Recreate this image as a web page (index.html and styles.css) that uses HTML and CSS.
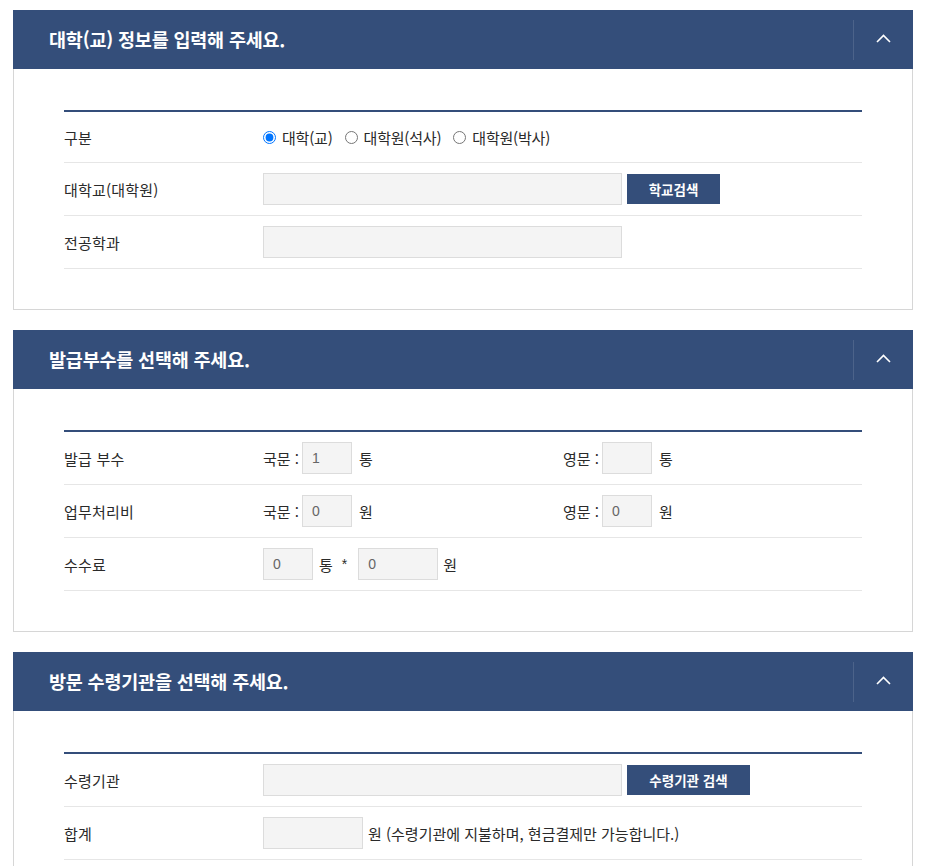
FILE: index.html
```html
<!DOCTYPE html>
<html lang="ko">
<head>
<meta charset="utf-8">
<title>증명서 발급</title>
<link rel="stylesheet" href="styles.css">
</head>
<body>
<div class="page">

  <section class="panel">
    <header class="panel-head">
      <h2 class="panel-title">대학(교) 정보를 입력해 주세요.</h2>
      <button class="toggle" type="button" aria-label="접기">
        <svg width="15" height="9" viewBox="0 0 15 9"><path d="M1 8 L7.5 1.5 L14 8" fill="none" stroke="#fff" stroke-width="1.6"/></svg>
      </button>
    </header>
    <div class="panel-body">
      <div class="form-table">
        <div class="row row-radio">
          <div class="label">구분</div>
          <div class="value radios">
            <label class="radio"><input type="radio" name="kind" checked>대학(교)</label>
            <label class="radio"><input type="radio" name="kind">대학원(석사)</label>
            <label class="radio"><input type="radio" name="kind">대학원(박사)</label>
          </div>
        </div>
        <div class="row">
          <div class="label">대학교(대학원)</div>
          <div class="value">
            <input class="field wide" type="text">
            <button class="btn btn-school" type="button">학교검색</button>
          </div>
        </div>
        <div class="row">
          <div class="label">전공학과</div>
          <div class="value">
            <input class="field wide" type="text">
          </div>
        </div>
      </div>
    </div>
  </section>

  <section class="panel">
    <header class="panel-head">
      <h2 class="panel-title">발급부수를 선택해 주세요.</h2>
      <button class="toggle" type="button" aria-label="접기">
        <svg width="15" height="9" viewBox="0 0 15 9"><path d="M1 8 L7.5 1.5 L14 8" fill="none" stroke="#fff" stroke-width="1.6"/></svg>
      </button>
    </header>
    <div class="panel-body">
      <div class="form-table">
        <div class="row">
          <div class="label">발급 부수</div>
          <div class="value halves">
            <div class="half"><span class="pre">국문 :</span><input class="field small" type="text" value="1"><span class="unit">통</span></div>
            <div class="half"><span class="pre">영문 :</span><input class="field small" type="text"><span class="unit">통</span></div>
          </div>
        </div>
        <div class="row">
          <div class="label">업무처리비</div>
          <div class="value halves">
            <div class="half"><span class="pre">국문 :</span><input class="field small" type="text" value="0"><span class="unit">원</span></div>
            <div class="half"><span class="pre">영문 :</span><input class="field small" type="text" value="0"><span class="unit">원</span></div>
          </div>
        </div>
        <div class="row">
          <div class="label">수수료</div>
          <div class="value">
            <input class="field small" type="text" value="0"><span class="unit u-count">통</span><span class="times">*</span><input class="field medium" type="text" value="0"><span class="unit u-won">원</span>
          </div>
        </div>
      </div>
    </div>
  </section>

  <section class="panel">
    <header class="panel-head">
      <h2 class="panel-title">방문 수령기관을 선택해 주세요.</h2>
      <button class="toggle" type="button" aria-label="접기">
        <svg width="15" height="9" viewBox="0 0 15 9"><path d="M1 8 L7.5 1.5 L14 8" fill="none" stroke="#fff" stroke-width="1.6"/></svg>
      </button>
    </header>
    <div class="panel-body">
      <div class="form-table">
        <div class="row">
          <div class="label">수령기관</div>
          <div class="value">
            <input class="field wide" type="text">
            <button class="btn btn-agency" type="button">수령기관 검색</button>
          </div>
        </div>
        <div class="row">
          <div class="label">합계</div>
          <div class="value">
            <input class="field total" type="text"><span class="unit u-won">원 (수령기관에 지불하며, 현금결제만 가능합니다.)</span>
          </div>
        </div>
      </div>
    </div>
  </section>

</div>
</body>
</html>
```

FILE: styles.css
```css
* { box-sizing: border-box; }

html, body {
  margin: 0;
  padding: 0;
  background: #fff;
}

body {
  font-family: "Noto Sans CJK KR", "Noto Sans", sans-serif;
  font-size: 15px;
  color: #2a2a2a;
}

.page {
  padding: 10px 12px 0 13px;
  width: 925px;
}

.panel {
  width: 900px;
  margin-bottom: 20px;
}

.panel-head {
  height: 59px;
  background: #344e7a;
  display: flex;
  align-items: center;
  padding-left: 36px;
}

.panel-title {
  flex: 1;
  margin: 0;
  color: #fff;
  font-size: 18.5px;
  font-weight: 700;
  letter-spacing: -0.2px;
  line-height: 1;
}

.toggle {
  width: 60px;
  height: 40px;
  border: 0;
  border-left: 1px solid rgba(255, 255, 255, 0.12);
  background: transparent;
  padding: 0;
  display: flex;
  align-items: center;
  justify-content: center;
  cursor: pointer;
}

.toggle svg { display: block; margin-top: -2px; }

.panel-body {
  border: 1px solid #d6d6d6;
  border-top: 0;
  padding: 41px 50px 40px 50px;
}

.form-table {
  border-top: 2px solid #344e7a;
}

.row {
  display: flex;
  align-items: center;
  height: 53px;
  border-bottom: 1px solid #e6e6e6;
}

.row-radio { height: 51px; }

.label {
  width: 199px;
  flex: none;
  line-height: 1;
  letter-spacing: 0.2px;
}

.value {
  flex: 1;
  display: flex;
  align-items: center;
  line-height: 1;
}

.radio {
  display: inline-flex;
  align-items: center;
  margin-right: 12px;
  letter-spacing: -0.2px;
  cursor: pointer;
}

.radio input {
  width: 13px;
  height: 13px;
  margin: 1px 6px 0 0;
}

.field {
  height: 32px;
  border: 1px solid #dcdcdc;
  background: #f4f4f4;
  font-family: "Liberation Sans", Arial, sans-serif;
  font-size: 14px;
  color: #666;
  padding: 0 9px;
  outline: none;
}

.field.wide { width: 359px; }
.field.small { width: 50px; }
.field.medium { width: 80px; }
.field.total { width: 100px; }

.btn {
  height: 30px;
  margin-left: 5px;
  border: 0;
  background: #344e7a;
  color: #fff;
  font-family: "Noto Sans CJK KR", sans-serif;
  font-size: 13.5px;
  font-weight: 700;
  padding: 0;
  cursor: pointer;
}

.btn-school { width: 93px; }
.btn-agency { width: 123px; }

.halves { display: flex; }

.half {
  width: 300px;
  display: flex;
  align-items: center;
}

.pre {
  margin-right: 3px;
}

.unit { margin-left: 7px; }
.u-count { margin-left: 6px; }
.u-won { margin-left: 5px; }

.times {
  margin: 0 11px 0 9px;
  font-family: "Liberation Sans", Arial, sans-serif;
  font-size: 14px;
}
```
